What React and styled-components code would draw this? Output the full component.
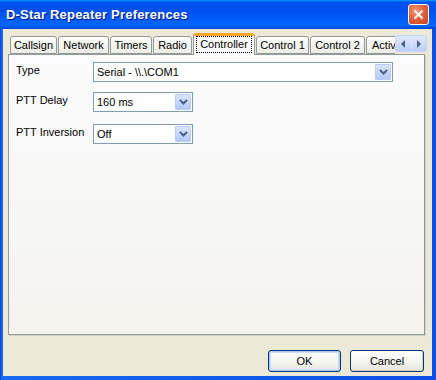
import React from 'react';
import styled, { createGlobalStyle } from 'styled-components';

const GlobalStyle = createGlobalStyle`
  html, body {
    margin: 0;
    padding: 0;
    background: #0831d9;
  }
  body {
    font-family: "Liberation Sans", Arial, sans-serif;
    font-size: 11px;
    color: #000;
  }
`;

const Window = styled.div`
  width: 436px;
  height: 380px;
  display: flex;
  flex-direction: column;
  background: linear-gradient(to right, #0831d9 0, #1c5ef2 1px, #166aee 2px, #0a4ee6 100%);
  box-sizing: border-box;
`;

const TitleBar = styled.div`
  height: 29px;
  flex-shrink: 0;
  display: flex;
  align-items: center;
  justify-content: space-between;
  padding: 0 7px 0 6px;
  background: linear-gradient(to bottom,
    #0997ff 0%, #0053ee 8%, #0050ee 40%, #0066ff 88%, #0050e0 96%, #0845d8 100%);
`;

const Title = styled.span`
  font-family: "Liberation Sans", Arial, sans-serif;
  font-weight: bold;
  font-size: 13px;
  color: #fff;
  text-shadow: 1px 1px 0 #0a1883;
  letter-spacing: 0.2px;
`;

const CloseButton = styled.div`
  width: 21px;
  height: 21px;
  box-sizing: border-box;
  border: 1px solid #fff;
  border-radius: 3px;
  background: radial-gradient(circle at 35% 30%, #f09a7a 0%, #e2603c 45%, #c4421e 100%);
  display: flex;
  align-items: center;
  justify-content: center;
`;

const Body = styled.div`
  flex: 1;
  display: flex;
  flex-direction: column;
  margin: 0 4px 4px 3px;
  padding: 4px 7px 4px 5px;
  background: #ece9d8;
  min-height: 0;
`;

const TabRow = styled.div`
  display: flex;
  align-items: flex-end;
  height: 21px;
  margin-right: -2px;
  position: relative;
  z-index: 2;
`;

const TabScroll = styled.div`
  flex: 1;
  display: flex;
  align-items: flex-end;
  overflow: hidden;
  padding-left: 2px;
  height: 22px;
  margin-bottom: -1px;
`;

const Tab = styled.div`
  flex-shrink: 0;
  box-sizing: border-box;
  width: ${p => p.$w}px;
  height: ${p => (p.$active ? 22 : 18)}px;
  margin-right: 1px;
  border: 1px solid #919b9c;
  border-bottom: ${p => (p.$active ? 'none' : '1px solid #919b9c')};
  border-top: ${p => (p.$active ? '3px solid #f7a630' : '1px solid #919b9c')};
  border-radius: 3px 3px 0 0;
  background: ${p => (p.$active
    ? '#fcfcfe'
    : 'linear-gradient(to bottom, #ffffff 0%, #f6f6f3 50%, #ecebe5 100%)')};
  display: flex;
  align-items: ${p => (p.$active ? 'flex-start' : 'center')};
  justify-content: ${p => (p.$clip ? 'flex-start' : 'center')};
  padding: ${p => (p.$active ? '1px 0 0' : p.$clip ? '0 0 1px 5px' : '0 0 1px')};
  white-space: nowrap;
  overflow: hidden;
  margin-bottom: ${p => (p.$active ? '0' : '1px')};
  font-size: 11px;
`;

const Focus = styled.span`
  outline: 1px dotted #000;
  outline-offset: 0;
  padding: 0 3px 1px;
  line-height: 14px;
`;

const Spin = styled.div`
  width: 32px;
  height: 17px;
  margin-bottom: 2px;
  display: flex;
  background: #c6d6fb;
  border: 1px solid #c6d6fb;
  box-sizing: border-box;
  border-radius: 2px;
`;

const SpinHalf = styled.div`
  flex: 1;
  display: flex;
  align-items: center;
  justify-content: center;
  background: linear-gradient(to bottom, #e0e9fd, #bccefa);
  border-right: ${p => (p.$first ? '1px solid #d9e4fc' : 'none')};
`;

const Panel = styled.div`
  flex: 1;
  box-sizing: border-box;
  border: 1px solid #919b9c;
  box-shadow: 1px 1px 0 #d0d0bf;
  background: linear-gradient(to bottom, #fcfcfe 0%, #f4f3ee 100%);
  padding: 7px 7px;
  display: flex;
  flex-direction: column;
`;

const Field = styled.div`
  display: flex;
  align-items: flex-start;
  margin-top: ${p => p.$top}px;
`;

const Label = styled.div`
  width: 77px;
  flex-shrink: 0;
  line-height: 14px;
  padding-top: 1px;
`;

const Combo = styled.div`
  width: ${p => p.$w}px;
  height: 20px;
  box-sizing: border-box;
  border: 1px solid #7f9db9;
  background: #fff;
  display: flex;
  align-items: center;
  justify-content: space-between;
  padding: 1px 1px 1px 3px;
`;

const DropButton = styled.div`
  width: 16px;
  height: 16px;
  box-sizing: border-box;
  border: 1px solid #b9cbf6;
  border-radius: 1px;
  background: linear-gradient(to bottom, #dbe6fd 0%, #c1d3fb 60%, #b4c8f8 100%);
  display: flex;
  align-items: center;
  justify-content: center;
`;

const Footer = styled.div`
  display: flex;
  justify-content: flex-end;
  gap: 9px;
  margin-top: 15px;
  padding-right: 1px;
`;

const Button = styled.div`
  width: ${p => p.$w}px;
  height: 22px;
  box-sizing: border-box;
  border: 1px solid #003c74;
  border-radius: 3px;
  background: linear-gradient(to bottom, #ffffff 0%, #f4f4f0 60%, #e3e2da 100%);
  box-shadow: ${p => (p.$default
    ? 'inset 0 0 0 1px #b2c6f0, inset 0 0 0 2px #cfdcf6'
    : 'inset -1px -1px 0 #d6d0c5')};
  display: flex;
  align-items: center;
  justify-content: center;
`;

const Chevron = () => (
  <svg width="9" height="6" viewBox="0 0 9 6">
    <path d="M1 1 L4.5 4.5 L8 1" fill="none" stroke="#4d6185" strokeWidth="2" />
  </svg>
);

const Arrow = ({ dir }) => (
  <svg width="5" height="8" viewBox="0 0 5 8">
    {dir === 'left'
      ? <path d="M4 0 L0 4 L4 8 Z" fill="#4d6185" />
      : <path d="M1 0 L5 4 L1 8 Z" fill="#4d6185" />}
  </svg>
);

const tabs = [
  { label: 'Callsign', w: 47 },
  { label: 'Network', w: 51 },
  { label: 'Timers', w: 42 },
  { label: 'Radio', w: 39 },
  { label: 'Controller', w: 62, active: true },
  { label: 'Control 1', w: 53 },
  { label: 'Control 2', w: 55 },
  { label: 'Activity', w: 60, clip: true },
];

const App = () => (
  <>
    <GlobalStyle />
    <Window>
      <TitleBar>
        <Title>D-Star Repeater Preferences</Title>
        <CloseButton>
          <svg width="11" height="11" viewBox="0 0 11 11">
            <path d="M1.5 1.5 L9.5 9.5 M9.5 1.5 L1.5 9.5" stroke="#fff" strokeWidth="2" />
          </svg>
        </CloseButton>
      </TitleBar>
      <Body>
        <TabRow>
          <TabScroll>
            {tabs.map(t => (
              <Tab key={t.label} $w={t.w} $active={t.active} $clip={t.clip}>
                {t.active ? <Focus>{t.label}</Focus> : <span>{t.label}</span>}
              </Tab>
            ))}
          </TabScroll>
          <Spin>
            <SpinHalf $first><Arrow dir="left" /></SpinHalf>
            <SpinHalf><Arrow dir="right" /></SpinHalf>
          </Spin>
        </TabRow>
        <Panel>
          <Field $top={0}>
            <Label>Type</Label>
            <Combo $w={300}>
              <span>Serial - \\.\COM1</span>
              <DropButton><Chevron /></DropButton>
            </Combo>
          </Field>
          <Field $top={10}>
            <Label>PTT Delay</Label>
            <Combo $w={100}>
              <span>160 ms</span>
              <DropButton><Chevron /></DropButton>
            </Combo>
          </Field>
          <Field $top={12}>
            <Label>PTT Inversion</Label>
            <Combo $w={100}>
              <span>Off</span>
              <DropButton><Chevron /></DropButton>
            </Combo>
          </Field>
        </Panel>
        <Footer>
          <Button $w={73} $default>OK</Button>
          <Button $w={74}>Cancel</Button>
        </Footer>
      </Body>
    </Window>
  </>
);

export default App;
